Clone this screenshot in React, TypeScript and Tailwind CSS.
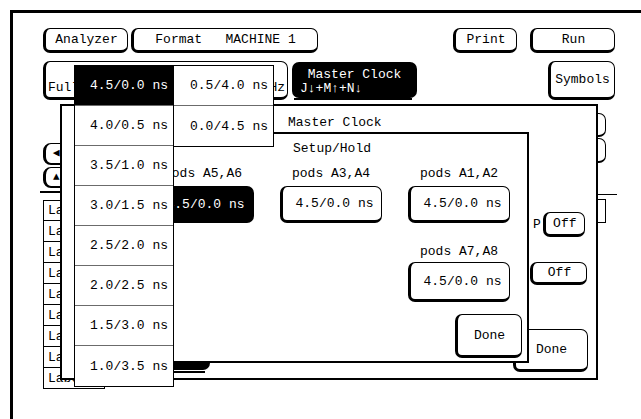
import React from "react";

function Btn({ className = "", children }: { className?: string; children?: React.ReactNode }) {
  return (
    <div className={"flex items-center justify-center rounded-[7px] border border-l-[3px] border-b-[3px] border-black bg-white " + className}>
      {children}
    </div>
  );
}

const popupLeft = ["4.5/0.0 ns", "4.0/0.5 ns", "3.5/1.0 ns", "3.0/1.5 ns", "2.5/2.0 ns", "2.0/2.5 ns", "1.5/3.0 ns", "1.0/3.5 ns"];
const popupRight = ["0.5/4.0 ns", "0.0/4.5 ns"];
const labels = ["Lab1", "Lab2", "Lab3", "Lab4", "Lab5", "Lab6", "Lab7", "Lab8", "Label"];

export default function App() {
  return (
    <div className="relative h-[419px] w-[641px] overflow-hidden bg-white text-[13px] leading-none text-black font-['Liberation_Mono','DejaVu_Sans_Mono',monospace]">
      {/* format screen behind the dialogs */}
      <div className="ml-[10px] mt-[10px] h-[409px] border-l-[3px] border-t-[3px] border-black pl-[30px] pt-[15px]">
        <div className="flex h-[25px]">
          <Btn className="w-[85px]">Analyzer</Btn>
          <Btn className="ml-[3px] w-[187px] whitespace-pre">Format   MACHINE 1</Btn>
          <Btn className="ml-[135px] w-[64px]">Print</Btn>
          <Btn className="ml-[13px] w-[85px]">Run</Btn>
        </div>

        <div className="mt-[8px] flex h-[39px]">
          <div className="flex w-[245px] items-end justify-between rounded-[7px] border border-l-[3px] border-b-[3px] border-black px-[2px] pb-[3px]">
            <span>Full Channel</span>
            <span>100 MHz</span>
          </div>
          <div className="ml-[4px] flex w-[125px] flex-col">
            <div className="mt-[1px] h-[36px] rounded-[7px] bg-black pt-[6px] text-white">
              <div className="text-center">Master Clock</div>
              <div className="mt-[1px] pl-[8px]">J↓+M↑+N↓</div>
            </div>
            <div className="ml-[2px] h-[2px] w-[118px] bg-black" />
          </div>
          <Btn className="ml-[131px] w-[67px]">Symbols</Btn>
        </div>

        <div className="flex">
          <div className="flex w-[62px] flex-col pt-[43px]">
            <div className="flex h-[22px] w-[40px] items-center rounded-l-[8px] border border-l-[3px] border-b-[2px] border-black pl-[7px]">
              <span className="text-[11px]">◀</span>
            </div>
            <div className="mt-[2px] flex h-[21px] w-[40px] items-center rounded-l-[8px] border border-l-[3px] border-b-[2px] border-black pl-[7px]">
              <span className="text-[11px]">▲</span>
            </div>
            <div className="-ml-[3px] mt-[3px] h-[2px] w-[22px] bg-black" />
            <div className="mt-[7px] flex flex-col">
              {labels.map((l, i) => (
                <div key={l} className={"flex h-[21px] w-[62px] items-center border-x border-b border-black pl-[4px] " + (i === 0 ? "border-t" : "")}>
                  {l}
                </div>
              ))}
            </div>
          </div>

          <div className="ml-auto mr-[24px] flex w-[80px] flex-col items-end pt-[13px]">
            <div className="mr-[11px] h-[24px] w-[70px] rounded-[7px] border border-b-[2px] border-black" />
            <div className="mr-[11px] mt-[1px] h-[25px] w-[70px] rounded-[7px] border border-b-[2px] border-black" />
            <div className="mt-[31px] h-[1px] w-[80px] bg-black" />
            <div className="mr-[11px] mt-[4px] h-[24px] w-[50px] border border-black" />
          </div>
        </div>
      </div>

      {/* Master Clock dialog */}
      <div className="absolute left-[60px] top-[104px] h-[276px] w-[538px] border-2 border-black bg-white">
        <div className="h-[28px] pl-[226px] pt-[10px]">Master Clock</div>
        <div className="flex">
          <div className="w-[451px]">
            <div className="ml-[88px] mt-[196px] h-[40px] w-[60px] rounded-[7px] bg-black" />
            <div className="ml-[88px] mt-[1px] h-[2px] w-[55px] bg-black" />
          </div>
          <div className="flex w-[75px] flex-col">
            <div className="ml-[20px] mt-[78px] flex h-[25px] items-center">
              <span>P</span>
              <Btn className="ml-[2px] h-[25px] w-[42px]">Off</Btn>
            </div>
            <Btn className="ml-[17px] mt-[25px] h-[23px] w-[57px]">Off</Btn>
            <Btn className="mt-[44px] h-[43px] w-[75px]">Done</Btn>
          </div>
        </div>
      </div>

      {/* Setup/Hold dialog */}
      <div className="absolute left-[140px] top-[132px] flex h-[231px] w-[389px] flex-col border-2 border-black bg-white">
        <div className="flex h-[26px] items-center pl-[151px] pt-[2px]">Setup/Hold</div>
        <div className="mt-[6px] flex h-[14px] items-center pl-[22px]">
          <span className="w-[128px]">pods A5,A6</span>
          <span className="w-[128px]">pods A3,A4</span>
          <span>pods A1,A2</span>
        </div>
        <div className="mt-[6px] flex h-[37px] pl-[10px]">
          <div className="flex w-[102px] items-center justify-center rounded-[7px] bg-black pl-[5px] text-white">4.5/0.0 ns</div>
          <Btn className="ml-[26px] w-[102px] pl-[5px]">4.5/0.0 ns</Btn>
          <Btn className="ml-[26px] w-[102px] pl-[5px]">4.5/0.0 ns</Btn>
        </div>
        <div className="mt-[21px] flex h-[14px] items-center pl-[278px]">pods A7,A8</div>
        <Btn className="ml-[266px] mt-[4px] h-[40px] w-[102px] pl-[5px]">4.5/0.0 ns</Btn>
        <Btn className="ml-[313px] mt-[12px] h-[44px] w-[67px]">Done</Btn>
      </div>

      {/* setup/hold choice popup */}
      <div className="absolute left-[74px] top-[65px] flex items-start">
        <div className="flex w-[100px] flex-col border border-black bg-white">
          {popupLeft.map((v, i) => (
            <div
              key={v}
              className={
                "flex h-[40px] items-center justify-end pr-[5px] " +
                (i === 0 ? "bg-black text-white " : "") +
                (i < popupLeft.length - 1 ? "border-b border-[#6b6b6b]" : "")
              }
            >
              {v}
            </div>
          ))}
        </div>
        <div className="flex w-[100px] flex-col border-y border-r border-black bg-white">
          {popupRight.map((v, i) => (
            <div key={v} className={"flex h-[40px] items-center justify-end pr-[5px] " + (i === 0 ? "border-b border-[#6b6b6b]" : "")}>
              {v}
            </div>
          ))}
        </div>
      </div>
    </div>
  );
}
